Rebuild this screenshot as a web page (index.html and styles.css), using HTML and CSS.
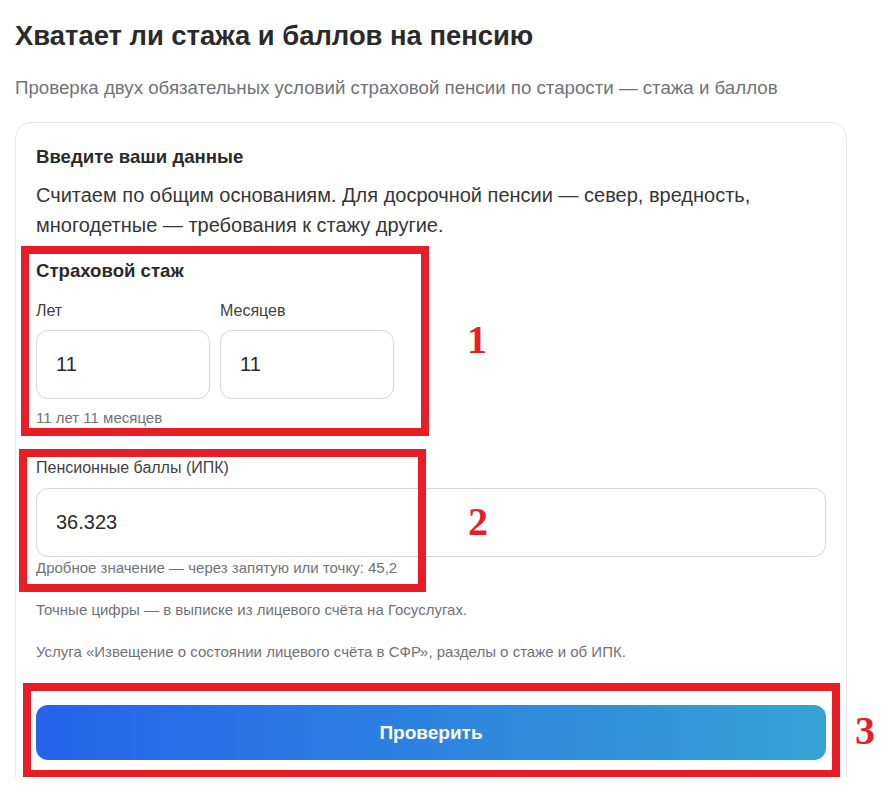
FILE: index.html
```html
<!DOCTYPE html>
<html lang="ru">
<head>
<meta charset="utf-8">
<title>Хватает ли стажа и баллов на пенсию</title>
<link rel="stylesheet" href="styles.css">
</head>
<body>
<div class="page">
  <h1 class="title">Хватает ли стажа и баллов на пенсию</h1>
  <p class="subtitle">Проверка двух обязательных условий страховой пенсии по старости — стажа и баллов</p>

  <section class="card">
    <h2 class="card-title">Введите ваши данные</h2>
    <p class="intro">Считаем по общим основаниям. Для досрочной пенсии — север, вредность, многодетные — требования к стажу другие.</p>

    <div class="group">
      <h3 class="group-title">Страховой стаж</h3>
      <div class="pair">
        <label class="field">
          <span class="label">Лет</span>
          <input class="input" type="text" value="11">
        </label>
        <label class="field">
          <span class="label">Месяцев</span>
          <input class="input" type="text" value="11">
        </label>
      </div>
      <p class="hint">11 лет 11 месяцев</p>
    </div>

    <div class="group group-points">
      <label class="field">
        <span class="label">Пенсионные баллы (ИПК)</span>
        <input class="input input-wide" type="text" value="36.323">
      </label>
      <p class="hint hint-tight">Дробное значение — через запятую или точку: 45,2</p>
    </div>

    <p class="note">Точные цифры — в выписке из лицевого счёта на Госуслугах.</p>
    <p class="note">Услуга «Извещение о состоянии лицевого счёта в СФР», разделы о стаже и об ИПК.</p>

    <button class="submit" type="button">Проверить</button>
  </section>

  <div class="mark mark-1"></div>
  <div class="mark mark-2"></div>
  <div class="mark mark-3"></div>
  <span class="num num-1">1</span>
  <span class="num num-2">2</span>
  <span class="num num-3">3</span>
</div>
</body>
</html>
```

FILE: styles.css
```css
* { box-sizing: border-box; }

html, body {
  margin: 0;
  padding: 0;
  background: #ffffff;
}

body {
  font-family: "Liberation Sans", Arial, sans-serif;
  color: #2b2b2b;
}

.page {
  position: relative;
  height: 777px;
  overflow: hidden;
  padding: 20px 0 0 15px;
}

.title {
  margin: 0;
  font-size: 27.4px;
  line-height: 32px;
  font-weight: 700;
  color: #2a2a2a;
}

.subtitle {
  margin: 23px 0 0;
  font-size: 18.7px;
  line-height: 26px;
  color: #6f7378;
}

.card {
  width: 832px;
  margin-top: 21px;
  border: 1px solid #e7e7e9;
  border-radius: 16px;
  padding: 22px 20px 60px;
}

.card-title {
  margin: 0;
  font-size: 18.6px;
  line-height: 24px;
  font-weight: 700;
  color: #2a2a2a;
}

.intro {
  margin: 11px 0 0;
  font-size: 20px;
  line-height: 30px;
  color: #363636;
}

.group {
  margin-top: 19px;
}

.group-title {
  margin: 0 0 18px;
  font-size: 18.6px;
  line-height: 24px;
  font-weight: 700;
  color: #2a2a2a;
}

.pair {
  display: flex;
  gap: 10px;
}

.pair .field {
  width: 174px;
}

.field {
  display: flex;
  flex-direction: column;
  gap: 9px;
}

.label {
  font-size: 16px;
  line-height: 20px;
  color: #3f3f46;
}

.input {
  height: 69px;
  width: 100%;
  border: 1px solid #d6d6da;
  border-radius: 12px;
  padding: 0 19px;
  font-family: inherit;
  font-size: 20px;
  color: #2a2a2a;
  background: #ffffff;
  outline: none;
}

.hint {
  margin: 10px 0 0;
  font-size: 15px;
  line-height: 18px;
  color: #6f7378;
}

.hint-tight {
  margin-top: 2px;
}

.group-points {
  margin-top: 31px;
}

.group-points .field {
  gap: 10px;
}

.note {
  margin: 24px 0 0;
  font-size: 15px;
  line-height: 18px;
  color: #6f7378;
}

.submit {
  display: block;
  width: 100%;
  height: 55px;
  margin-top: 44px;
  border: 0;
  border-radius: 12px;
  background: linear-gradient(90deg, #2563eb 0%, #2f86de 55%, #35a2d4 100%);
  color: #ffffff;
  font-family: inherit;
  font-size: 19px;
  font-weight: 700;
  cursor: pointer;
}

/* annotation overlays */
.mark {
  position: absolute;
  border: 8px solid #e81d25;
}

.mark-1 { left: 21px; top: 246px; width: 408px; height: 190px; }
.mark-2 { left: 19px; top: 449px; width: 407px; height: 143px; }
.mark-3 { left: 23px; top: 683px; width: 817px; height: 95px; }

.num {
  position: absolute;
  font-family: "Liberation Serif", "Times New Roman", serif;
  font-weight: 700;
  font-size: 40px;
  line-height: 40px;
  color: #e81d25;
}

.num-1 { left: 467px; top: 320px; }
.num-2 { left: 468px; top: 502px; }
.num-3 { left: 855px; top: 711px; }
```
